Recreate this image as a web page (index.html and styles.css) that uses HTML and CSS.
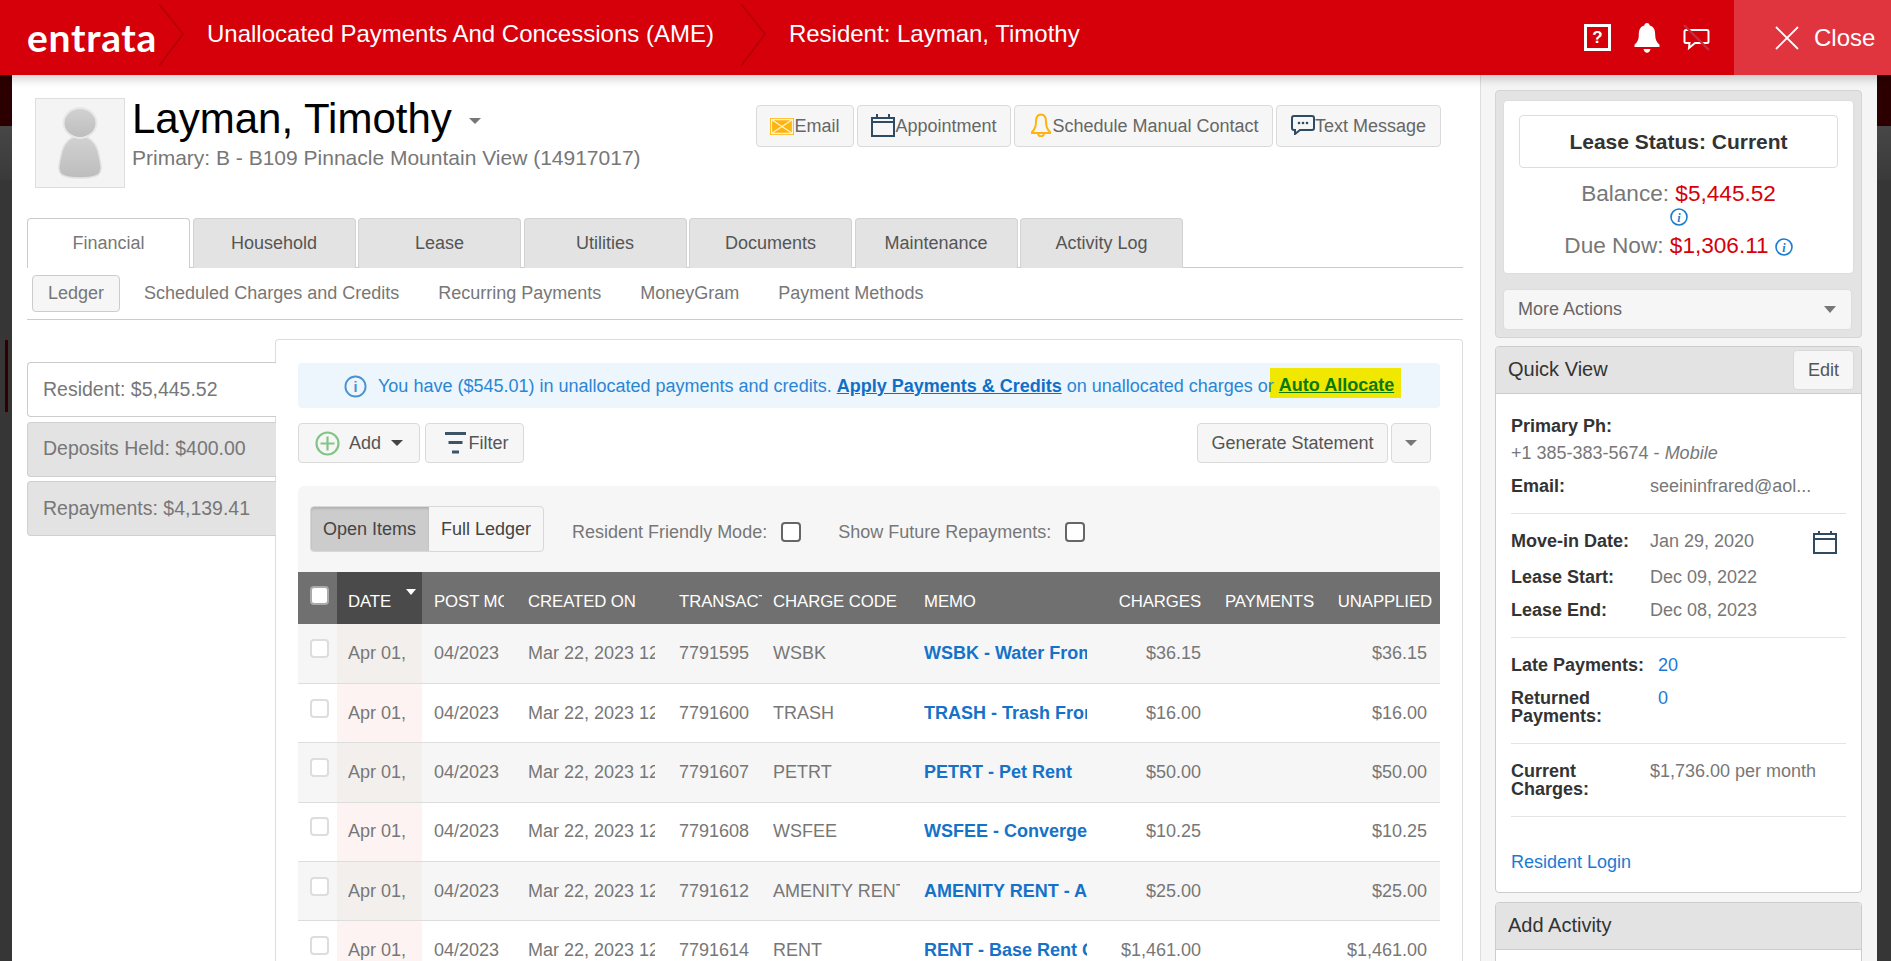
FILE: index.html
```html
<!DOCTYPE html>
<html lang="en">
<head>
<meta charset="utf-8">
<title>Resident: Layman, Timothy</title>
<link rel="stylesheet" href="styles.css">
</head>
<body>
<header class="topbar">
  <span class="logo">entrata</span>
  <svg class="crumb" viewBox="0 0 26 62"><path d="M1 0 L25 30 L1 62"/></svg>
  <span class="title title-a">Unallocated Payments And Concessions (AME)</span>
  <svg class="crumb crumb-b" viewBox="0 0 26 62"><path d="M1 0 L25 30 L1 62"/></svg>
  <span class="title title-b">Resident: Layman, Timothy</span>
  <div class="top-icons">
    <span class="help">?</span>
    <svg class="bell" viewBox="0 0 26 30"><path d="M13 0c1.600 0 2.600 1.100 2.600 2.600 4.600 1.200 5.600 5.100 5.600 9.400 0 4.600 1.300 6.900 4.300 9.800v2.200H.5v-2.200c3-2.900 4.300-5.200 4.300-9.800 0-4.300 1-8.200 5.600-9.400C10.400 1.100 11.400 0 13 0z" fill="#fff"/><path d="M9.500 26h7c-.4 2.400-1.800 3.800-3.500 3.800S9.900 28.400 9.500 26z" fill="#fff"/></svg>
    <svg class="chat" viewBox="0 0 27 26"><path d="M3 5h21a1.500 1.500 0 0 1 1.500 1.500v10A1.500 1.500 0 0 1 24 18H12l-6 5 .5-5H3a1.500 1.500 0 0 1-1.500-1.500v-10A1.500 1.500 0 0 1 3 5z" fill="none" stroke="#fff" stroke-width="2"/><path d="M1 0 L26 25" stroke="#c4303a" stroke-width="2.400"/></svg>
  </div>
  <div class="close">
    <svg class="close-x" viewBox="0 0 24 24"><path d="M1 1 L23 23 M23 1 L1 23" stroke="#fff" stroke-width="1.800" fill="none"/></svg>
    <span>Close</span>
  </div>
</header>

<div class="stage">
  <main class="main">
    <section class="profile">
      <div class="avatar">
        <svg viewBox="0 0 88 88" width="88" height="88">
          <defs><linearGradient id="fig" x1="0" y1="0" x2="0" y2="1"><stop offset="0" stop-color="#d2d2d2"/><stop offset="1" stop-color="#bdbdbd"/></linearGradient></defs>
          <path d="M44 37C55 37 61 46 63 56C65 66 67 72 62 76C55 80 33 80 26 76C21 72 23 66 25 56C27 46 33 37 44 37Z" fill="url(#fig)" stroke="#e2e2e2" stroke-width="1.500"/>
          <ellipse cx="44" cy="24" rx="16.500" ry="15" fill="url(#fig)" stroke="#e8e8e8" stroke-width="2"/>
        </svg>
      </div>
      <div class="identity">
        <h1 class="name">Layman, Timothy <span class="caret caret-name"></span></h1>
        <p class="primary">Primary: B - B109 Pinnacle Mountain View (14917017)</p>
      </div>
      <div class="actions">
        <button class="btn act act-email"><svg class="ic-mail" viewBox="0 0 24 17"><rect width="24" height="17" fill="#ffb30f"/><path d="M1.500 1.500 L22.500 15.500 M22.500 1.500 L1.500 15.500 M1.500 1.500H22.500V15.500H1.500Z" stroke="#fff4d0" stroke-width="1.300" fill="none"/></svg>Email</button>
        <button class="btn act act-appt"><svg class="ic-cal" viewBox="0 0 24 24"><path d="M1 5h22v18H1zM1 9h22M6 1v5M18 1v5" fill="none" stroke="#2f4a63" stroke-width="2"/></svg>Appointment</button>
        <button class="btn act act-sched"><svg class="ic-bell" viewBox="0 0 22 24"><path d="M11 1.500c3.500 0 5 3 5 7 0 5 1 8 4 10.500v1H2v-1c3-2.500 4-5.500 4-10.500 0-4 1.500-7 5-7zM8 21c.4 1.500 1.500 2.300 3 2.300s2.600-.8 3-2.300" fill="none" stroke="#ffb30f" stroke-width="2"/></svg>Schedule Manual Contact</button>
        <button class="btn act act-text"><svg class="ic-chat" viewBox="0 0 24 20"><path d="M3 1h18a2 2 0 0 1 2 2v10a2 2 0 0 1-2 2H9l-5 4v-4H3a2 2 0 0 1-2-2V3a2 2 0 0 1 2-2z" fill="none" stroke="#2f4a63" stroke-width="2"/><circle cx="8" cy="8" r="1.300" fill="#2f4a63"/><circle cx="12" cy="8" r="1.300" fill="#2f4a63"/><circle cx="16" cy="8" r="1.300" fill="#2f4a63"/></svg>Text Message</button>
      </div>
    </section>

    <nav class="tabs">
      <a class="tab tab-on">Financial</a>
      <a class="tab">Household</a>
      <a class="tab">Lease</a>
      <a class="tab">Utilities</a>
      <a class="tab">Documents</a>
      <a class="tab">Maintenance</a>
      <a class="tab">Activity Log</a>
    </nav>
    <nav class="subnav">
      <a class="sub sub-on">Ledger</a>
      <a class="sub">Scheduled Charges and Credits</a>
      <a class="sub">Recurring Payments</a>
      <a class="sub">MoneyGram</a>
      <a class="sub">Payment Methods</a>
    </nav>

    <div class="ledger">
      <aside class="vtabs">
        <a class="vtab vtab-on">Resident: $5,445.52</a>
        <a class="vtab">Deposits Held: $400.00</a>
        <a class="vtab">Repayments: $4,139.41</a>
      </aside>
      <section class="panel">
        <div class="alert">
          <svg class="ic-info" viewBox="0 0 24 24"><circle cx="12" cy="12" r="10.500" fill="none" stroke="#4a93cf" stroke-width="2"/><text x="12" y="18" text-anchor="middle" class="ic-info-i">i</text></svg>
          <span class="alert-text">You have ($545.01) in unallocated payments and credits. <a class="apply">Apply Payments &amp; Credits</a> on unallocated charges or</span>
          <a class="auto">Auto Allocate</a>
        </div>

        <div class="tools">
          <button class="btn tool tool-add"><svg class="ic-plus" viewBox="0 0 25 25"><circle cx="12.500" cy="12.500" r="11" fill="none" stroke="#84c488" stroke-width="2.200"/><path d="M12.500 5.500v14M5.500 12.500h14" stroke="#84c488" stroke-width="2.200"/></svg>Add<span class="caret caret-dark"></span></button>
          <button class="btn tool tool-filter"><svg class="ic-filter" viewBox="0 0 21 23"><path d="M0 1.500h21M3.500 10.500h14M7 20h7" stroke="#3d5468" stroke-width="3.200"/></svg>Filter</button>
          <button class="btn tool tool-gen">Generate Statement</button>
          <button class="btn tool tool-more"><span class="caret"></span></button>
        </div>

        <div class="card">
          <div class="filters">
            <div class="seg"><span class="seg-item seg-on">Open Items</span><span class="seg-item seg-off">Full Ledger</span></div>
            <span class="f-label f-one">Resident Friendly Mode:</span><span class="box"></span>
            <span class="f-label f-two">Show Future Repayments:</span><span class="box"></span>
          </div>
          <table class="grid">
            <colgroup>
              <col class="c-chk"><col class="c-date"><col class="c-post"><col class="c-made"><col class="c-id"><col class="c-code"><col class="c-memo"><col class="c-chg"><col class="c-pay"><col class="c-una">
            </colgroup>
            <thead>
              <tr>
                <th><span class="tick tick-head"></span></th>
                <th class="th-date"><div class="clip">DATE</div><span class="sort"></span></th>
                <th class="post"><div class="clip">POST MONTH</div></th>
                <th><div class="clip">CREATED ON</div></th>
                <th class="th-id"><div class="clip">TRANSACTION</div></th>
                <th><div class="clip">CHARGE CODE</div></th>
                <th><div class="clip">MEMO</div></th>
                <th class="num"><div class="clip">CHARGES</div></th>
                <th class="num"><div class="clip">PAYMENTS</div></th>
                <th class="num th-last"><div class="clip">UNAPPLIED</div></th>
              </tr>
            </thead>
            <tbody>
              <tr><td><span class="tick"></span></td><td class="td-date"><div class="clip">Apr 01, 2023</div></td><td class="post"><div class="clip">04/2023</div></td><td><div class="clip">Mar 22, 2023 12:00 PM</div></td><td><div class="clip">7791595</div></td><td><div class="clip">WSBK</div></td><td><div class="clip memo">WSBK - Water From Resident</div></td><td class="num">$36.15</td><td></td><td class="num td-last">$36.15</td></tr>
              <tr><td><span class="tick"></span></td><td class="td-date"><div class="clip">Apr 01, 2023</div></td><td class="post"><div class="clip">04/2023</div></td><td><div class="clip">Mar 22, 2023 12:00 PM</div></td><td><div class="clip">7791600</div></td><td><div class="clip">TRASH</div></td><td><div class="clip memo">TRASH - Trash From Resident</div></td><td class="num">$16.00</td><td></td><td class="num td-last">$16.00</td></tr>
              <tr><td><span class="tick"></span></td><td class="td-date"><div class="clip">Apr 01, 2023</div></td><td class="post"><div class="clip">04/2023</div></td><td><div class="clip">Mar 22, 2023 12:00 PM</div></td><td><div class="clip">7791607</div></td><td><div class="clip">PETRT</div></td><td><div class="clip memo">PETRT - Pet Rent</div></td><td class="num">$50.00</td><td></td><td class="num td-last">$50.00</td></tr>
              <tr><td><span class="tick"></span></td><td class="td-date"><div class="clip">Apr 01, 2023</div></td><td class="post"><div class="clip">04/2023</div></td><td><div class="clip">Mar 22, 2023 12:00 PM</div></td><td><div class="clip">7791608</div></td><td><div class="clip">WSFEE</div></td><td><div class="clip memo">WSFEE - Convergent</div></td><td class="num">$10.25</td><td></td><td class="num td-last">$10.25</td></tr>
              <tr><td><span class="tick"></span></td><td class="td-date"><div class="clip">Apr 01, 2023</div></td><td class="post"><div class="clip">04/2023</div></td><td><div class="clip">Mar 22, 2023 12:00 PM</div></td><td><div class="clip">7791612</div></td><td><div class="clip">AMENITY RENT</div></td><td><div class="clip memo">AMENITY RENT - Amenity</div></td><td class="num">$25.00</td><td></td><td class="num td-last">$25.00</td></tr>
              <tr><td><span class="tick"></span></td><td class="td-date"><div class="clip">Apr 01, 2023</div></td><td class="post"><div class="clip">04/2023</div></td><td><div class="clip">Mar 22, 2023 12:00 PM</div></td><td><div class="clip">7791614</div></td><td><div class="clip">RENT</div></td><td><div class="clip memo">RENT - Base Rent Charge</div></td><td class="num">$1,461.00</td><td></td><td class="num td-last">$1,461.00</td></tr>
            </tbody>
          </table>
        </div>
      </section>
    </div>
  </main>

  <aside class="side">
    <section class="status">
      <div class="status-card">
        <div class="lease-status">Lease Status: Current</div>
        <div class="bal">Balance: <b>$5,445.52</b></div>
        <svg class="ic-i ic-i-bal" viewBox="0 0 18 18"><circle cx="9" cy="9" r="8" fill="none" stroke="#1a7bd0" stroke-width="1.600"/><text x="9" y="13.500" text-anchor="middle" class="ic-i-t">i</text></svg>
        <div class="due">Due Now: <b>$1,306.11</b><svg class="ic-i ic-i-due" viewBox="0 0 18 18"><circle cx="9" cy="9" r="8" fill="none" stroke="#1a7bd0" stroke-width="1.600"/><text x="9" y="13.500" text-anchor="middle" class="ic-i-t">i</text></svg></div>
      </div>
      <div class="more">More Actions<span class="caret caret-more"></span></div>
    </section>

    <section class="box-panel qv">
      <div class="bp-head"><span>Quick View</span><button class="btn edit">Edit</button></div>
      <div class="qv-body">
        <div class="qv-group qv-g1">
          <div class="qv-line"><b>Primary Ph:</b></div>
          <div class="qv-line qv-phone">+1 385-383-5674 - <i>Mobile</i></div>
          <div class="qv-row qv-email"><b>Email:</b><span>seeininfrared@aol...</span></div>
        </div>
        <div class="qv-group">
          <div class="qv-row"><b>Move-in Date:</b><span>Jan 29, 2020</span><svg class="ic-cal2" viewBox="0 0 24 24"><path d="M1 4h22v19H1zM1 9h22M6 1v4M18 1v4" fill="none" stroke="#2f4a63" stroke-width="2"/></svg></div>
          <div class="qv-row qv-start"><b>Lease Start:</b><span>Dec 09, 2022</span></div>
          <div class="qv-row qv-end"><b>Lease End:</b><span>Dec 08, 2023</span></div>
        </div>
        <div class="qv-group qv-g3">
          <div class="qv-row qv-wide"><b>Late Payments:</b><a>20</a></div>
          <div class="qv-row qv-wide qv-two"><b>Returned Payments:</b><a>0</a></div>
        </div>
        <div class="qv-group qv-g4">
          <div class="qv-row qv-two"><b>Current Charges:</b><span>$1,736.00 per month</span></div>
        </div>
        <a class="login">Resident Login</a>
      </div>
    </section>

    <section class="box-panel activity">
      <div class="bp-head"><span>Add Activity</span></div>
    </section>
  </aside>
</div>
</body>
</html>
```

FILE: styles.css
```css
* { box-sizing: border-box; }
html, body { margin: 0; height: 961px; overflow: hidden; }
body {
  font-family: "Liberation Sans", Arial, sans-serif;
  font-size: 18px;
  color: #777;
  background:
    linear-gradient(#300000, #300000) 5px 340px / 3px 72px no-repeat,
    linear-gradient(#2c0000, #2c0000) 0 75px / 100% 51px no-repeat,
    linear-gradient(#474747, #3a3a3a) 0 126px / 100% 54px no-repeat,
    #363636;
}
button { font: inherit; color: inherit; }
p, h1 { margin: 0; }

/* top bar */
.topbar {
  position: relative;
  z-index: 2;
  display: flex;
  align-items: center;
  height: 75px;
  background: #d50009;
  color: #fff;
  box-shadow: 0 3px 10px rgba(0, 0, 0, .22);
}
.logo {
  width: 129px;
  margin-left: 27px;
  margin-top: -1px;
  font-family: Lato, sans-serif;
  font-weight: 700;
  font-size: 39px;
  letter-spacing: .7px;
  line-height: 1;
  white-space: nowrap;
}
.crumb { width: 26px; height: 62px; margin: -5px 0 0 2px; flex: none; }
.crumb path { fill: none; stroke: #b4000a; stroke-width: 1.6; }
.crumb-b { margin-left: 26px; }
.title { font-size: 24px; margin: -7px 0 0 23px; white-space: nowrap; }
.top-icons { display: flex; align-items: center; gap: 23px; margin-left: auto; padding-right: 24px; }
.help {
  width: 27px; height: 27px;
  border: 3px solid #fff;
  font-size: 17px; font-weight: 700;
  line-height: 21px; text-align: center;
}
.bell { width: 26px; height: 30px; }
.chat { width: 27px; height: 26px; }
.close {
  display: flex; align-items: center;
  width: 157px; height: 75px;
  padding-left: 41px;
  background: #e0343e;
  font-size: 24px;
}
.close-x { width: 24px; height: 24px; margin-right: 15px; }

/* stage */
.stage { display: flex; height: 886px; margin: 0 14px 0 12px; overflow: hidden; }
.main { width: 1469px; flex: none; background: #fff; border-right: 1px solid #ddd; }
.side { flex: 1; padding: 15px 15px 0 14px; background: #f5f5f5; }

/* profile */
.profile { display: flex; height: 143px; padding: 23px 39px 0 23px; }
.avatar {
  display: flex; align-items: center; justify-content: center;
  width: 90px; height: 90px;
  border: 1px solid #ddd;
  background: #f4f4f4;
}
.identity { margin-left: 7px; }
.name { font-weight: 400; font-size: 42px; line-height: 44px; margin-top: -1px; color: #000; white-space: nowrap; }
.primary { margin-top: 5px; font-size: 21px; line-height: 24px; color: #777; white-space: nowrap; }
.caret {
  display: inline-block;
  width: 0; height: 0;
  border-left: 6px solid transparent;
  border-right: 6px solid transparent;
  border-top: 6px solid #777;
}
.caret-name { margin-left: 6px; vertical-align: 9px; }
.actions { display: flex; gap: 3px; margin-left: auto; margin-top: 7px; }
.btn {
  display: inline-flex; align-items: center;
  background: #f6f6f6;
  border: 1px solid #dadada;
  border-radius: 4px;
  color: #555;
  padding: 0;
  white-space: nowrap;
}
.act { height: 42px; justify-content: center; color: #666; }
.act-email { width: 98px; }
.act-appt { width: 154px; }
.act-sched { width: 259px; padding-left: 2px; }
.act-text { width: 165px; }
.ic-mail { width: 24px; height: 17px; flex: none; }
.ic-cal { width: 24px; height: 24px; margin-top: -3px; flex: none; }
.ic-bell { width: 22px; height: 24px; margin-top: -3px; flex: none; }
.ic-chat { width: 24px; height: 20px; margin-top: -2px; flex: none; }

/* tabs */
.tabs { display: flex; gap: 2.500px; height: 50px; margin: 0 17px 0 15px; border-bottom: 1px solid #ccc; }
.tab {
  display: flex; align-items: center; justify-content: center;
  width: 163px; height: 50px;
  background: #e3e3e3;
  border: 1px solid #d2d2d2;
  border-bottom: 0;
  border-radius: 4px 4px 0 0;
  color: #555;
}
.tab-on { background: #fff; color: #777; border-color: #ccc; }
.subnav {
  display: flex; align-items: center; gap: 39px;
  height: 52px;
  margin: 0 17px 0 15px;
  padding: 0 0 1px 5px;
  border-bottom: 1px solid #ccc;
}
.sub-on {
  display: flex; align-items: center;
  height: 37px; padding: 0 15px;
  margin-right: -15px;
  background: #f6f6f6;
  border: 1px solid #ccc;
  border-radius: 4px;
}

/* ledger region */
.ledger { display: flex; margin: 19px 17px 0 15px; height: 700px; }
.vtabs { position: relative; z-index: 1; display: flex; flex-direction: column; gap: 4.500px; width: 249px; flex: none; padding-top: 23px; margin-right: -1px; }
.vtab {
  display: flex; align-items: center;
  height: 55px;
  padding-left: 15px;
  padding-bottom: 1px;
  background: #e3e3e3;
  border: 1px solid #d0d0d0;
  border-right: 0;
  border-radius: 4px 0 0 4px;
  font-size: 19.500px;
}
.vtab-on { background: #fff; border-color: #ccc; }
.panel { flex: 1; padding: 23px 22px 0; border: 1px solid #ddd; border-bottom: 0; border-radius: 4px 4px 0 0; }
.alert {
  display: flex; align-items: center;
  height: 45px;
  padding: 1px 0 0 46px;
  background: #edf5fd;
  border-radius: 4px;
  color: #2a86d4;
  white-space: nowrap;
}
.alert-text { position: relative; z-index: 1; }
.ic-info { width: 23px; height: 23px; margin-right: 11px; flex: none; }
.ic-info-i { font: 700 15px "Liberation Sans", sans-serif; fill: #4a93cf; }
.apply { color: #0f6fc6; font-weight: 700; text-decoration: underline; }
.auto {
  display: flex; align-items: center;
  height: 30px;
  padding: 6px 7px 0 9px;
  margin: 0 0 7px -4px;
  background: #f0e800;
  color: #0a7a0a;
  font-weight: 700;
  text-decoration: underline;
}
.tools { display: flex; gap: 5px; height: 40px; margin-top: 15px; }
.tool { height: 40px; justify-content: center; }
.tool-add { width: 122px; }
.ic-plus { width: 25px; height: 25px; margin-right: 9px; flex: none; }
.caret-dark { margin-left: 10px; border-top-color: #444; }
.tool-filter { width: 99px; padding-left: 4px; }
.ic-filter { width: 21px; height: 23px; margin-right: 3px; flex: none; }
.tool-gen { width: 191px; margin-left: auto; }
.tool-more { width: 40px; margin-left: -2px; margin-right: 9px; }
.card { margin-top: 23px; background: #f6f6f6; border-radius: 6px 6px 0 0; }
.filters { display: flex; align-items: center; height: 86px; padding: 0 0 0 12px; }
.seg { display: flex; height: 46px; border: 1px solid #d8d8d8; border-radius: 4px; background: #f6f6f6; color: #444; }
.seg-item { display: flex; align-items: center; padding: 0 11px 0 12px; }
.seg-off { padding-right: 12px; }
.seg-on { width: 118px; background: #ccc; border-radius: 3px 0 0 3px; box-shadow: inset 0 2px 2px rgba(0, 0, 0, .12); }
.f-label { margin-top: 7px; }
.f-one { margin-left: 28px; }
.f-two { margin-left: 37px; }
.box { width: 20px; height: 20px; margin: 5px 0 0 14px; border: 2px solid #666; border-radius: 4px; background: #fff; }

/* table */
.grid { width: 100%; table-layout: fixed; border-collapse: collapse; }
.c-chk { width: 39px; } .c-date { width: 85px; } .c-post { width: 95px; } .c-made { width: 151px; }
.c-id { width: 94px; } .c-code { width: 151px; } .c-memo { width: 187px; } .c-chg { width: 112px; }
.c-pay { width: 113px; } .c-una { width: 115px; }
.grid th {
  height: 52px;
  padding: 8px 11px 0;
  background: #707070;
  color: #fff;
  font-size: 16.800px;
  font-weight: 400;
  text-align: left;
  letter-spacing: -.1px;
}
.grid th:first-child, .grid td:first-child { padding: 0 0 0 12px; }
.grid th.th-date { position: relative; background: #4a4a4a; }
.grid th.th-id { padding-right: 0; }
.grid th.th-id .clip { margin-right: 0; }
.sort {
  position: absolute; top: 17px; right: 6px;
  width: 0; height: 0;
  border-left: 5.500px solid transparent;
  border-right: 5.500px solid transparent;
  border-top: 6px solid #fff;
}
.grid td { height: 59.400px; padding: 0 11px; border-bottom: 1px solid #ddd; background: #fff; white-space: nowrap; }
.grid tr:nth-child(odd) td { background: #f6f6f6; }
.grid td.td-date { background: #fdf3f2; }
.grid tr:nth-child(odd) td.td-date { background: #f3efed; }
.grid th.post, .grid td.post { padding-left: 12px; }
.clip { overflow: hidden; white-space: nowrap; margin-right: 2px; }
.grid th.num { text-align: right; }
.num { text-align: right; }
.grid th.num .clip { margin-right: 0; }
.grid th.th-last { padding-right: 8px; }
.grid td.td-last { padding-right: 13px; }
.memo { color: #1572c8; font-weight: 700; }
.tick {
  display: block;
  width: 19px; height: 19px;
  margin-bottom: 10px;
  background: #fff;
  border: 2px solid #ddd;
  border-radius: 4px;
}
.tick-head { margin: -5px 0 0; border-color: #aaa; }

/* sidebar */
.status { height: 248px; padding: 9px 7px; background: #e3e3e3; border: 1px solid #d4d4d4; border-radius: 4px; }
.status-card { height: 174px; padding-top: 14px; text-align: center; background: #fff; border: 1px solid #ddd; border-radius: 4px; font-size: 22.600px; }
.lease-status {
  display: flex; align-items: center; justify-content: center;
  height: 53px;
  margin: 0 15px;
  border: 1px solid #ddd;
  border-radius: 4px;
  font-size: 21px; font-weight: 700;
  color: #333;
}
.bal { margin-top: 13px; line-height: 26px; }
.bal b, .due b { font-weight: 400; color: #d50009; }
.ic-i { width: 18px; height: 18px; display: block; }
.ic-i-bal { margin: 1px auto 0; }
.ic-i-due { display: inline-block; margin-left: 6px; vertical-align: -3px; }
.ic-i-t { font: italic 700 12px "Liberation Serif", serif; fill: #1a7bd0; }
.due { margin-top: 7px; line-height: 26px; }
.more {
  display: flex; align-items: center; justify-content: space-between;
  height: 41px;
  margin: 15px 2px 0 0;
  padding: 0 15px 0 14px;
  background: #f6f6f6;
  border: 1px solid #ddd;
  border-radius: 4px;
  color: #666;
}
.caret-more { border-top-width: 7px; }
.box-panel { margin-top: 8px; background: #fff; border: 1px solid #ccc; border-radius: 4px; }
.bp-head {
  display: flex; align-items: center; justify-content: space-between;
  height: 47px;
  padding: 0 8px 0 12px;
  background: #e3e3e3;
  border-bottom: 1px solid #ccc;
  border-radius: 4px 4px 0 0;
  font-size: 20px;
  color: #333;
}
.bp-head > span { margin-top: -2px; }
.edit { justify-content: center; width: 61px; height: 40px; margin-right: -1px; font-size: 18px; }
.qv { height: 547px; }
.activity { margin-top: 9px; height: 100px; }
.qv-body { padding: 0 15px 0 15px; }
.qv-group { padding: 14px 0; border-bottom: 1px solid #e4e4e4; }
.qv-g1 { padding-top: 19px; }
.qv-g3 { padding-top: 14px; }
.qv-g3, .qv-g4 { padding-bottom: 18px; }
.qv-g4 { padding-top: 18px; }
.qv-line { line-height: 26px; }
.qv-line b, .qv-row b { color: #333; }
.qv-phone { margin-top: 1px; }
.qv-row { display: grid; grid-template-columns: 139px 1fr auto; align-items: center; min-height: 26px; margin-top: 7px; position: relative; }
.qv-row:first-child { margin-top: 0; }
.qv-group .qv-start { margin-top: 10px; }
.qv-two { line-height: 18px; align-items: start; margin-top: 11px; }
.qv-wide { grid-template-columns: 147px 1fr; }
.qv-row a, .login { color: #1a7bd6; }
.qv-row.qv-two b { width: 120px; }
.ic-cal2 { width: 24px; height: 24px; margin-right: 9px; margin-top: 1px; }
.login { display: block; margin-top: 32px; line-height: 26px; }
```
